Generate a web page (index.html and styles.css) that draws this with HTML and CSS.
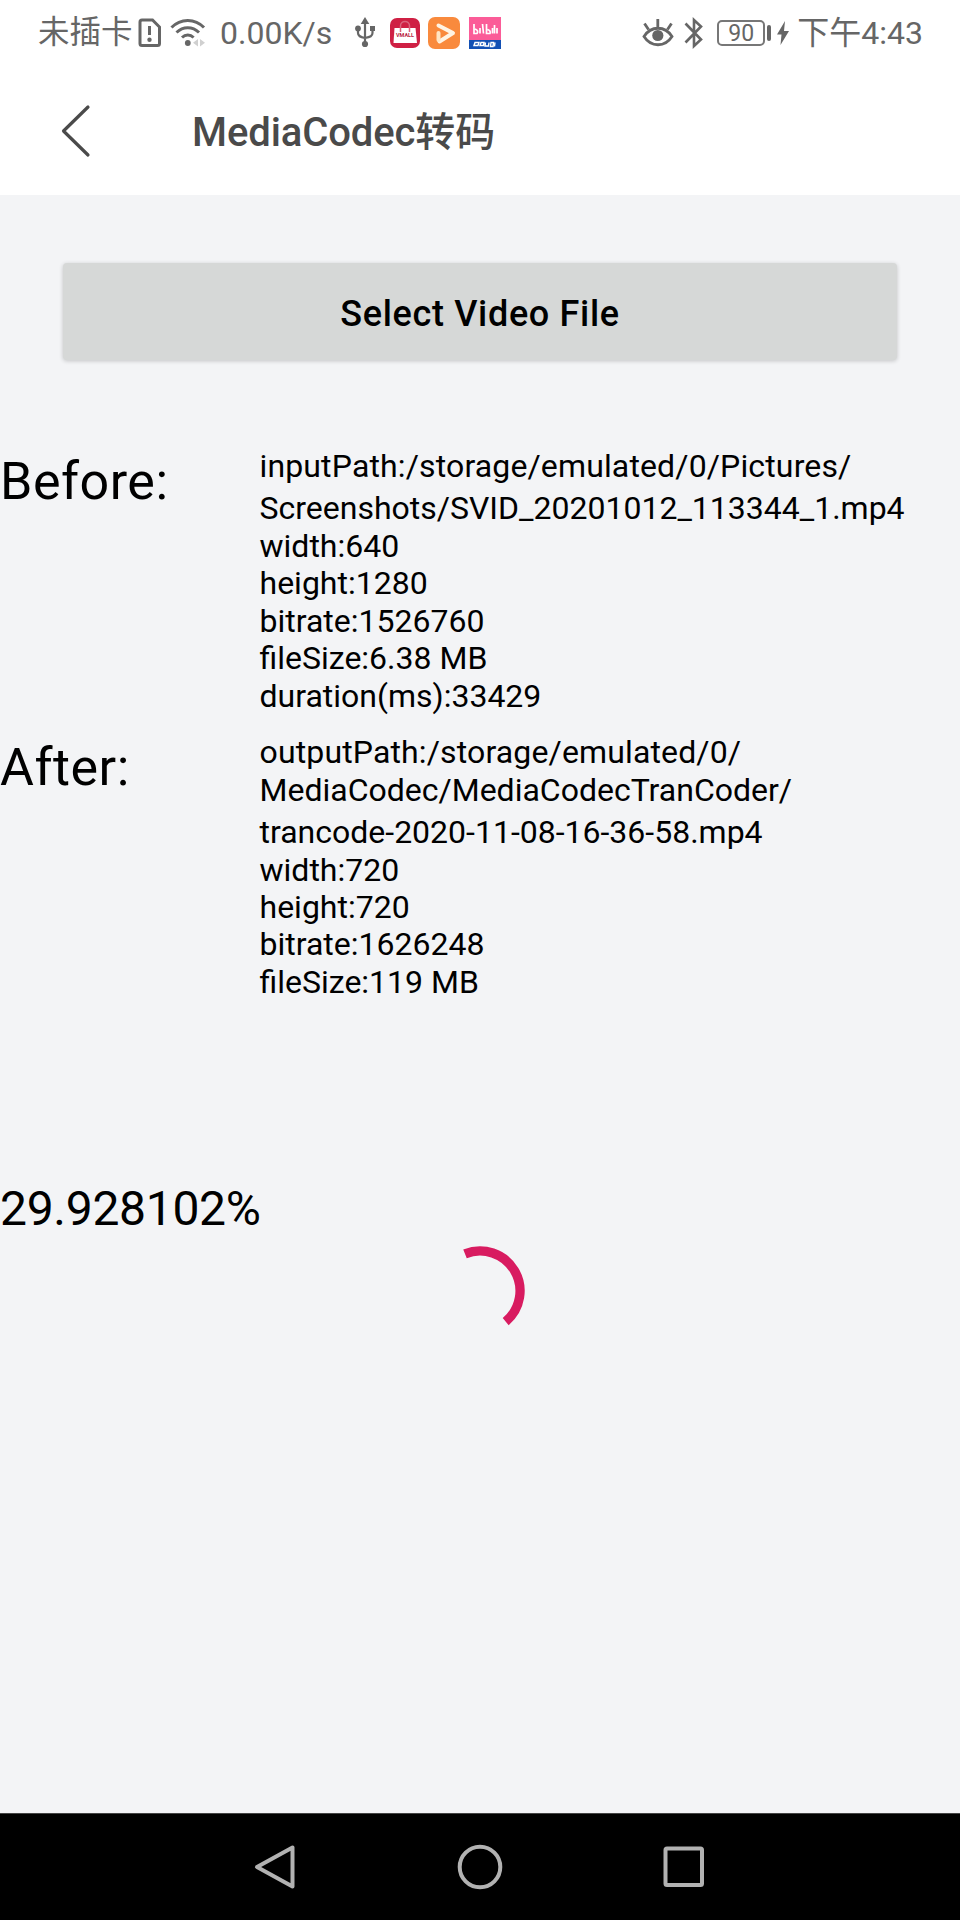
FILE: index.html
```html
<!DOCTYPE html>
<html lang="zh-CN">
<head>
<meta charset="utf-8">
<title>MediaCodec转码</title>
<link rel="stylesheet" href="styles.css">
</head>
<body>
<div class="screen">
  <header class="status">
    <div class="status-group">
      <span class="status-text carrier">未插卡</span>
      <svg class="ic sim" width="24" height="30" viewBox="0 0 24 30" fill="none" stroke="#666" stroke-width="3"><path d="M4 2h10.500l7 7v16.500a2 2 0 0 1-2 2H4a2 2 0 0 1-2-2V4a2 2 0 0 1 2-2z"/><path d="M11.500 8v9"/><circle cx="11.500" cy="21.700" r="2.200" fill="#666" stroke="none"/></svg>
      <svg class="ic wifi" width="36" height="30" viewBox="0 0 36 30" fill="none" stroke="#666" stroke-width="3"><path d="M1.500 9.500C10.500 0 25 0 34 9.500M6.500 14.500c6.500-6.300 16-6.300 22.500 0M12 19.500c3.400-3.300 8.200-3.300 11.600 0"/><circle cx="17.800" cy="25" r="2.900" fill="#666" stroke="none"/><path d="M28 21v7.500l-5-3.700zM30 21v7.500l5-3.700z" fill="#d0d0d0" stroke="none"/></svg>
      <span class="status-text speed">0.00K/s</span>
      <svg class="ic usb" width="22" height="31" viewBox="0 0 22 31" fill="none" stroke="#666" stroke-width="2.200"><path d="M10 5v21M3 12v4c0 3 2 4 7 5M17.500 12v4c0 3-2 4-7.500 5"/><g fill="#666" stroke="none"><path d="M10 0l4.300 7H5.700z"/><circle cx="3" cy="11.500" r="2.900"/><rect x="15" y="9" width="5" height="5"/><circle cx="10" cy="27" r="3.100"/></g></svg>
      <svg class="ic bag" width="30" height="30" viewBox="0 0 30 30"><rect width="30" height="30" rx="7" fill="#cf2044"/><path d="M4.500 10h21l1.500 15H3.500z" fill="#fff"/><path d="M10.500 14V8c0-6 9-6 9 0v6" fill="none" stroke="#d9647d" stroke-width="1.500"/><text x="15" y="19" class="bag-label" textLength="18" lengthAdjust="spacingAndGlyphs">VMALL</text></svg>
      <svg class="ic play" width="32" height="32" viewBox="0 0 32 32"><rect width="32" height="32" rx="7" fill="#f98a3d"/><path d="M10.500 8.500l14.500 7.500-13.500 8.500" fill="none" stroke="#fff4e4" stroke-width="4" stroke-linejoin="round" stroke-linecap="round"/><path d="M10.500 16v7" stroke="#ffe5c4" stroke-width="4" stroke-linecap="round"/></svg>
      <svg class="ic bili" width="32" height="32" viewBox="0 0 32 32"><rect width="32" height="32" fill="#fb5c98"/><rect y="23" width="32" height="9" fill="#1250b4"/><path d="M5 7v9.500h3q2-3-2-4.500M11 11v5.500M13.500 7l1 9.500M17.500 7v9.500h3.500q1-3-2.500-4M23.500 11v5.500M25.500 8v8.500M28 11v5.500" fill="none" stroke="#fff" stroke-width="1.700"/><path d="M5 28.500l1-3h4l-1 3zM11 28.500l1-3h3l-.5 3zM16.500 25.500l-.5 3.500h3.500l.5-3.500M22 25.500l-.5 4h2.500l.5-4zM26 25.500l-.5 4" fill="none" stroke="#fff" stroke-width="1.400"/></svg>
    </div>
    <div class="status-group">
      <svg class="ic eye" width="32" height="30" viewBox="0 0 32 30" fill="none" stroke="#666" stroke-width="2.800"><path d="M2 18.500C9 7.500 23 7.500 30 18.500 23 29.500 9 29.500 2 18.500zM15.800 9V1M6.500 11.500L2.500 5.500M25.500 11.500l4-6"/><circle cx="15.800" cy="17.500" r="5.600" fill="#666" stroke="none"/></svg>
      <svg class="ic bt" width="20" height="32" viewBox="0 0 20 32" fill="none" stroke="#666" stroke-width="2.600"><path d="M1.500 6.500L17 22.500l-7 6.500V3l7 6.500L1.500 25.500"/></svg>
      <span class="battery">90</span><span class="battery-tip"></span>
      <svg class="ic bolt" width="12" height="24" viewBox="0 0 12 24"><path d="M8 0L0 13.500h4.500L3.500 24 12 10H7z" fill="#666"/></svg>
      <span class="status-text">下午4:43</span>
    </div>
  </header>
  <nav class="titlebar">
    <svg class="back" width="30" height="54" viewBox="0 0 30 54" fill="none" stroke="#4a4a4a" stroke-width="3.200" stroke-linecap="round" stroke-linejoin="round"><path d="M27 3L2.500 27 27 51"/></svg>
    <h1 class="title">MediaCodec转码</h1>
  </nav>
  <main class="content">
    <button class="select">Select Video File</button>
    <section class="row before">
      <h2 class="label">Before:</h2>
      <div class="info">
        <div class="path-start">inputPath:/storage/emulated/0/Pictures/</div>
        <div class="path-end">Screenshots/SVID_20201012_113344_1.mp4</div>
        <div>width:640</div>
        <div>height:1280</div>
        <div>bitrate:1526760</div>
        <div>fileSize:6.38 MB</div>
        <div>duration(ms):33429</div>
      </div>
    </section>
    <section class="row after">
      <h2 class="label">After:</h2>
      <div class="info">
        <div class="path-start">outputPath:/storage/emulated/0/</div>
        <div>MediaCodec/MediaCodecTranCoder/</div>
        <div class="path-end">trancode-2020-11-08-16-36-58.mp4</div>
        <div>width:720</div>
        <div>height:720</div>
        <div>bitrate:1626248</div>
        <div>fileSize:119 MB</div>
      </div>
    </section>
    <div class="percent">29.928102%</div>
    <svg class="spinner" width="96" height="96" viewBox="0 0 96 96" fill="none" stroke="#d81b60" stroke-width="9.300"><path d="M33 10.900A40 40 0 0 1 73.700 78.650"/></svg>
  </main>
  <footer class="navbar">
    <svg width="48" height="48" viewBox="0 0 48 48"><path d="M40.500 4.500v39L5 24z"/></svg>
    <svg width="48" height="48" viewBox="0 0 48 48"><circle cx="24" cy="24" r="20.300"/></svg>
    <svg width="48" height="48" viewBox="0 0 48 48"><rect x="5.500" y="5.500" width="36.500" height="36.500" rx="1.500"/></svg>
  </footer>
</div>
</body>
</html>
```
FILE: styles.css
```css
* { box-sizing: border-box; }
body {
  margin: 0;
  font-family: Roboto, "Noto Sans CJK SC", sans-serif;
  color: #000;
}
.screen {
  display: flex;
  flex-direction: column;
  width: 960px;
  height: 1920px;
  overflow: hidden;
  background: #f3f4f6;
}
.status {
  display: flex;
  justify-content: space-between;
  height: 65px;
  padding: 0 37px 0 38px;
  background: #fff;
  color: #666;
}
.status-group {
  display: flex;
  align-items: center;
  height: 65px;
}
.ic { display: block; flex: none; }
.status-text {
  padding-top: 1px;
  font-size: 32px;
  line-height: 40px;
  white-space: nowrap;
}
.carrier { width: 95px; font-size: 31.5px; }
.sim { margin-left: 5px; }
.wifi { margin-left: 8px; }
.speed { width: 113px; margin-left: 14px; }
.usb { margin-left: 22px; }
.bag { margin-left: 13px; }
.play { margin-left: 8px; }
.bili { margin-left: 9px; }
.bag-label { font-size: 6px; font-weight: 700; fill: #b81d40; text-anchor: middle; }
.bt { margin-left: 10px; }
.battery {
  width: 48px;
  height: 26px;
  margin-left: 13px;
  border: 2px solid #777;
  border-radius: 5px;
  font-size: 23px;
  line-height: 23px;
  text-align: center;
}
.battery-tip {
  width: 4px;
  height: 16px;
  margin-left: 2px;
  border-radius: 2px;
  background: #666;
}
.bolt { margin: 0 8px 0 6px; }
.titlebar {
  display: flex;
  align-items: center;
  height: 130px;
  padding: 2px 0 0 61px;
  background: #fff;
  color: #4a4a4a;
}
.title {
  margin: 0 0 0 101px;
  padding-top: 4px;
  font-size: 40px;
  font-weight: 500;
  line-height: 48px;
  letter-spacing: -.1px;
}
.content {
  display: flex;
  flex-direction: column;
  flex: 1;
  padding-top: 68px;
}
.select {
  height: 97px;
  margin: 0 63px;
  padding: 4px 0 0;
  border: 0;
  border-radius: 4px;
  background: #d6d8d7;
  box-shadow: 0 1px 4px rgba(0, 0, 0, .2);
  color: #000;
  font: 500 36px/42px Roboto, sans-serif;
  letter-spacing: .67px;
}
.row { display: flex; }
.before { margin-top: 88px; }
.after { margin-top: 19px; }
.label {
  width: 259px;
  margin: 3px 0 0;
  font-size: 52px;
  font-weight: 400;
  line-height: 61px;
  letter-spacing: .5px;
}
.info {
  padding-left: .5px;
  font-size: 32px;
  line-height: 37.45px;
  white-space: nowrap;
}
.path-start { letter-spacing: .14px; }
.path-end { padding-top: 5px; }
.percent {
  margin-top: 180px;
  font-size: 48px;
  line-height: 56px;
  letter-spacing: -.3px;
}
.spinner {
  align-self: center;
  margin-top: 6px;
}
.navbar {
  display: flex;
  justify-content: center;
  gap: 156px;
  height: 107px;
  padding-top: 29px;
  border-top: 1px solid #444;
  background: #000;
}
.navbar svg {
  fill: none;
  stroke: #b2b2b2;
  stroke-width: 4px;
  stroke-linejoin: round;
}
```
